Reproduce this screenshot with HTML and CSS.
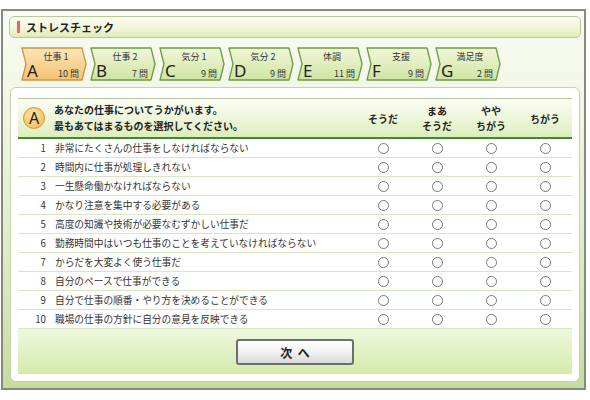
FILE: index.html
```html
<!DOCTYPE html>
<html lang="ja">
<head>
<meta charset="utf-8">
<link rel="stylesheet" href="styles.css">
</head>
<body>
<div class="frame">
  <div class="titlebar"><span class="redbar"></span><span class="title">ストレスチェック</span></div>
  <div class="tabs">
    <div class="tab active">
      <svg class="tabshape" width="67" height="34" viewBox="0 0 67 34"><defs><linearGradient id="go" x1="0" y1="0" x2="0" y2="1"><stop offset="0" stop-color="#fde6b8"/><stop offset="1" stop-color="#f4c272"/></linearGradient></defs><path d="M2 1 H62 L66 17 L62 33 H2 L6 17 Z" fill="url(#go)" stroke="#c99548" stroke-width="1.3" stroke-linejoin="round"/></svg>
      <span class="tlabel">仕事 1</span>
      <span class="tbottom"><span class="tletter">A</span><span class="tcount">10 問</span></span>
    </div>
    <div class="tab">
      <svg class="tabshape" width="67" height="34" viewBox="0 0 67 34"><defs><linearGradient id="gg" x1="0" y1="0" x2="0" y2="1"><stop offset="0" stop-color="#f1f7da"/><stop offset="1" stop-color="#cfe4a2"/></linearGradient></defs><path d="M2 1 H62 L66 17 L62 33 H2 L6 17 Z" fill="url(#gg)" stroke="#6e9a42" stroke-width="1.3" stroke-linejoin="round"/></svg>
      <span class="tlabel">仕事 2</span>
      <span class="tbottom"><span class="tletter">B</span><span class="tcount">7 問</span></span>
    </div>
    <div class="tab">
      <svg class="tabshape" width="67" height="34" viewBox="0 0 67 34"><path d="M2 1 H62 L66 17 L62 33 H2 L6 17 Z" fill="url(#gg)" stroke="#6e9a42" stroke-width="1.3" stroke-linejoin="round"/></svg>
      <span class="tlabel">気分 1</span>
      <span class="tbottom"><span class="tletter">C</span><span class="tcount">9 問</span></span>
    </div>
    <div class="tab">
      <svg class="tabshape" width="67" height="34" viewBox="0 0 67 34"><path d="M2 1 H62 L66 17 L62 33 H2 L6 17 Z" fill="url(#gg)" stroke="#6e9a42" stroke-width="1.3" stroke-linejoin="round"/></svg>
      <span class="tlabel">気分 2</span>
      <span class="tbottom"><span class="tletter">D</span><span class="tcount">9 問</span></span>
    </div>
    <div class="tab">
      <svg class="tabshape" width="67" height="34" viewBox="0 0 67 34"><path d="M2 1 H62 L66 17 L62 33 H2 L6 17 Z" fill="url(#gg)" stroke="#6e9a42" stroke-width="1.3" stroke-linejoin="round"/></svg>
      <span class="tlabel">体調</span>
      <span class="tbottom"><span class="tletter">E</span><span class="tcount">11 問</span></span>
    </div>
    <div class="tab">
      <svg class="tabshape" width="67" height="34" viewBox="0 0 67 34"><path d="M2 1 H62 L66 17 L62 33 H2 L6 17 Z" fill="url(#gg)" stroke="#6e9a42" stroke-width="1.3" stroke-linejoin="round"/></svg>
      <span class="tlabel">支援</span>
      <span class="tbottom"><span class="tletter">F</span><span class="tcount">9 問</span></span>
    </div>
    <div class="tab">
      <svg class="tabshape" width="67" height="34" viewBox="0 0 67 34"><path d="M2 1 H62 L66 17 L62 33 H2 L6 17 Z" fill="url(#gg)" stroke="#6e9a42" stroke-width="1.3" stroke-linejoin="round"/></svg>
      <span class="tlabel">満足度</span>
      <span class="tbottom"><span class="tletter">G</span><span class="tcount">2 問</span></span>
    </div>
  </div>
  <div class="panel">
    <div class="qtable">
      <div class="qhead">
        <div class="qintro">
          <span class="badge">A</span>
          <span class="introtext">あなたの仕事についてうかがいます。<br>最もあてはまるものを選択してください。</span>
        </div>
        <div class="opt">そうだ</div>
        <div class="opt">まあ<br>そうだ</div>
        <div class="opt">やや<br>ちがう</div>
        <div class="opt">ちがう</div>
      </div>
      <div class="qrow"><div class="qtext"><span class="num">1</span>非常にたくさんの仕事をしなければならない</div><div class="cell"><span class="radio"></span></div><div class="cell"><span class="radio"></span></div><div class="cell"><span class="radio"></span></div><div class="cell"><span class="radio"></span></div></div>
      <div class="qrow"><div class="qtext"><span class="num">2</span>時間内に仕事が処理しきれない</div><div class="cell"><span class="radio"></span></div><div class="cell"><span class="radio"></span></div><div class="cell"><span class="radio"></span></div><div class="cell"><span class="radio"></span></div></div>
      <div class="qrow"><div class="qtext"><span class="num">3</span>一生懸命働かなければならない</div><div class="cell"><span class="radio"></span></div><div class="cell"><span class="radio"></span></div><div class="cell"><span class="radio"></span></div><div class="cell"><span class="radio"></span></div></div>
      <div class="qrow"><div class="qtext"><span class="num">4</span>かなり注意を集中する必要がある</div><div class="cell"><span class="radio"></span></div><div class="cell"><span class="radio"></span></div><div class="cell"><span class="radio"></span></div><div class="cell"><span class="radio"></span></div></div>
      <div class="qrow"><div class="qtext"><span class="num">5</span>高度の知識や技術が必要なむずかしい仕事だ</div><div class="cell"><span class="radio"></span></div><div class="cell"><span class="radio"></span></div><div class="cell"><span class="radio"></span></div><div class="cell"><span class="radio"></span></div></div>
      <div class="qrow"><div class="qtext"><span class="num">6</span>勤務時間中はいつも仕事のことを考えていなければならない</div><div class="cell"><span class="radio"></span></div><div class="cell"><span class="radio"></span></div><div class="cell"><span class="radio"></span></div><div class="cell"><span class="radio"></span></div></div>
      <div class="qrow"><div class="qtext"><span class="num">7</span>からだを大変よく使う仕事だ</div><div class="cell"><span class="radio"></span></div><div class="cell"><span class="radio"></span></div><div class="cell"><span class="radio"></span></div><div class="cell"><span class="radio"></span></div></div>
      <div class="qrow"><div class="qtext"><span class="num">8</span>自分のペースで仕事ができる</div><div class="cell"><span class="radio"></span></div><div class="cell"><span class="radio"></span></div><div class="cell"><span class="radio"></span></div><div class="cell"><span class="radio"></span></div></div>
      <div class="qrow"><div class="qtext"><span class="num">9</span>自分で仕事の順番・やり方を決めることができる</div><div class="cell"><span class="radio"></span></div><div class="cell"><span class="radio"></span></div><div class="cell"><span class="radio"></span></div><div class="cell"><span class="radio"></span></div></div>
      <div class="qrow"><div class="qtext"><span class="num">10</span>職場の仕事の方針に自分の意見を反映できる</div><div class="cell"><span class="radio"></span></div><div class="cell"><span class="radio"></span></div><div class="cell"><span class="radio"></span></div><div class="cell"><span class="radio"></span></div></div>
      <div class="qfoot"><button class="next">次&nbsp;&nbsp;へ</button></div>
    </div>
  </div>
</div>
</body>
</html>
```
FILE: styles.css
```css
* { box-sizing: border-box; }
html, body { margin: 0; padding: 0; background: #ffffff; }
body {
  font-family: "Noto Sans CJK JP", "Noto Sans", sans-serif;
  color: #333;
}
.frame {
  margin: 9px 0 0 1px;
  width: 585px;
  height: 381px;
  border: 2px solid #858a80;
  padding-top: 5px;
  background: linear-gradient(to bottom, #f9fbf3 0%, #eff5e0 30%, #dbe9c2 70%, #c6dc9e 100%);
}
.titlebar {
  margin-left: 6px;
  width: 572px;
  height: 22px;
  border: 1px solid #b5c99b;
  border-radius: 5px;
  background: linear-gradient(to bottom, #fcfdf2 0%, #f1f6d8 55%, #e0ecb6 100%);
  display: flex;
  align-items: center;
}
.redbar {
  width: 3px;
  height: 12px;
  margin-left: 7px;
  background: #ec6464;
}
.title {
  margin-left: 6px;
  font-size: 11px;
  font-weight: bold;
  color: #222;
  line-height: 1;
}
.tabs {
  display: flex;
  gap: 2px;
  margin-top: 9px;
  padding-left: 17px;
  height: 34px;
}
.tab {
  position: relative;
  width: 67px;
  height: 34px;
  display: flex;
  flex-direction: column;
}
.tabshape {
  position: absolute;
  left: 0;
  top: 0;
}
.tlabel {
  position: relative;
  margin-top: 4px;
  text-align: center;
  padding-left: 5px;
  font-size: 9px;
  line-height: 11px;
  color: #333;
}
.tbottom {
  position: relative;
  display: flex;
  justify-content: space-between;
  align-items: baseline;
  padding: 0 8px 0 7px;
  line-height: 17px;
}
.tletter {
  font-family: "Noto Sans", "Open Sans", sans-serif;
  font-size: 17px;
  color: #222;
}
.tcount {
  font-size: 9px;
  color: #333;
}
.panel {
  margin: 6px 0 0 7px;
  width: 570px;
  height: 295px;
  background: #fff;
  border: 1px solid #c4d4ac;
  border-radius: 6px;
  padding: 10px 7px 8px 7px;
}
.qtable {
  display: flex;
  flex-direction: column;
}
.qhead, .qrow {
  display: grid;
  grid-template-columns: 338px 54px 54px 54px 54px;
}
.qhead {
  height: 41px;
  border-top: 1px solid #b4c69e;
  border-bottom: 2px solid #3d8b2c;
  background: linear-gradient(to bottom, #fbfdf4 0%, #eef6dc 50%, #dcedbb 100%);
  align-items: center;
}
.qintro {
  display: flex;
  align-items: center;
  padding-left: 5px;
}
.badge {
  width: 22px;
  height: 22px;
  border-radius: 50%;
  border: 1px solid #d19a3a;
  background: radial-gradient(circle at 40% 35%, #fde3a6 0%, #f7c566 70%, #efb24a 100%);
  display: flex;
  align-items: center;
  justify-content: center;
  font-family: "Noto Sans", "Open Sans", sans-serif;
  font-size: 16px;
  color: #222;
  line-height: 1;
}
.introtext {
  margin-left: 9px;
  font-size: 10px;
  font-weight: bold;
  line-height: 16px;
  color: #222;
}
.opt {
  text-align: center;
  font-size: 10px;
  font-weight: bold;
  line-height: 15px;
  color: #222;
}
.qrow {
  height: 19px;
  border-bottom: 1px solid #d6e7c2;
  align-items: center;
}
.qtext {
  display: flex;
  align-items: center;
  font-size: 9.7px;
  line-height: 18px;
  color: #333;
  white-space: nowrap;
}
.num {
  width: 28px;
  text-align: right;
  margin-right: 9px;
}
.cell {
  display: flex;
  justify-content: center;
  align-items: center;
}
.radio {
  width: 11px;
  height: 11px;
  border: 1px solid #777;
  border-radius: 50%;
  background: #fff;
}
.qfoot {
  height: 45px;
  display: flex;
  justify-content: center;
  align-items: flex-start;
  padding-top: 10px;
  background: linear-gradient(to bottom, #eef7de 0%, #e2f1c6 50%, #d4eaab 100%);
}
.next {
  width: 118px;
  height: 26px;
  border: 2px solid #6e6e6e;
  border-radius: 3px;
  background: linear-gradient(to bottom, #ffffff 0%, #f2f2f2 50%, #d9d9d9 100%);
  font-family: "Noto Sans CJK JP", sans-serif;
  font-size: 12px;
  font-weight: bold;
  color: #222;
  padding: 0;
}
```
